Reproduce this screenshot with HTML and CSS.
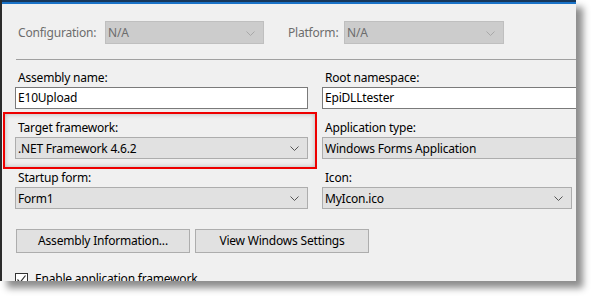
FILE: index.html
```html
<!DOCTYPE html>
<html>
<head>
<meta charset="utf-8">
<link rel="stylesheet" href="styles.css">
</head>
<body>
<div class="page">
<div class="window">
  <div class="topbar"></div>
  <div class="content">
    <div class="config-row">
      <span class="lbl-dis cfg-lbl">Configuration:</span>
      <div class="combo disabled cfg-combo"><span>N/A</span><svg class="chev" width="9" height="5" viewBox="0 0 9 5"><path d="M0.5 0.5 L4.5 4.5 L8.5 0.5" fill="none" stroke="currentColor"/></svg></div>
      <span class="lbl-dis plat-lbl">Platform:</span>
      <div class="combo disabled plat-combo"><span>N/A</span><svg class="chev" width="9" height="5" viewBox="0 0 9 5"><path d="M0.5 0.5 L4.5 4.5 L8.5 0.5" fill="none" stroke="currentColor"/></svg></div>
    </div>
    <div class="sep"></div>
    <div class="grid">
      <div class="cell">
        <div class="lbl">Assembly name:</div>
        <div class="textbox">E10Upload</div>
      </div>
      <div class="cell">
        <div class="lbl">Root namespace:</div>
        <div class="textbox">EpiDLLtester</div>
      </div>
      <div class="cell">
        <div class="lbl">Target framework:</div>
        <div class="combo"><span>.NET Framework 4.6.2</span><svg class="chev" width="9" height="5" viewBox="0 0 9 5"><path d="M0.5 0.5 L4.5 4.5 L8.5 0.5" fill="none" stroke="currentColor"/></svg></div>
      </div>
      <div class="cell">
        <div class="lbl">Application type:</div>
        <div class="combo"><span>Windows Forms Application</span></div>
      </div>
      <div class="cell">
        <div class="lbl">Startup form:</div>
        <div class="combo"><span>Form1</span><svg class="chev" width="9" height="5" viewBox="0 0 9 5"><path d="M0.5 0.5 L4.5 4.5 L8.5 0.5" fill="none" stroke="currentColor"/></svg></div>
      </div>
      <div class="cell">
        <div class="lbl">Icon:</div>
        <div class="combo icon-combo"><span>MyIcon.ico</span><svg class="chev" width="9" height="5" viewBox="0 0 9 5"><path d="M0.5 0.5 L4.5 4.5 L8.5 0.5" fill="none" stroke="currentColor"/></svg></div>
      </div>
    </div>
    <div class="buttons">
      <div class="btn">Assembly Information...</div>
      <div class="btn">View Windows Settings</div>
    </div>
    <div class="check-row">
      <span class="checkbox"><svg width="11" height="11" viewBox="0 0 11 11"><path d="M1.5 5.5 L4 8.5 L9.5 1.5" fill="none" stroke="#333" stroke-width="1.2"/></svg></span>
      <span>Enable application framework</span>
    </div>
  </div>
  <div class="highlight"></div>
</div>
</div>
</body>
</html>
```

FILE: styles.css
```css
* { box-sizing: border-box; }
html, body { margin: 0; padding: 0; background: #ffffff; }
body {
  font-family: "Noto Sans", "Open Sans", sans-serif;
  font-size: 12px;
  letter-spacing: -0.2px;
  color: #000;
}
.page {
  height: 297px;
}
.window {
  position: relative;
  width: 576px;
  height: 281px;
  background: #f0f0f0;
  border-left: 2px solid #2b2b2b;
  overflow: hidden;
  box-shadow: 7px 7px 7px rgba(0, 0, 0, 0.45);
}
.topbar {
  height: 4px;
  border-top: 2px solid #17375a;
  background: #1a73c8;
}
.content {
  padding-left: 13px;
}
.config-row {
  display: flex;
  align-items: center;
  height: 23px;
  margin-top: 17px;
}
.lbl-dis { color: #6d6d6d; line-height: 16px; }
.cfg-lbl { width: 90px; padding-left: 3px; }
.plat-lbl { width: 56px; margin-left: 24px; }
.combo {
  position: relative;
  display: flex;
  align-items: center;
  height: 22px;
  background: #e1e1e1;
  border: 1px solid #adadad;
  padding-left: 2px;
  white-space: nowrap;
}
.combo.disabled {
  height: 23px;
  background: #cccccc;
  border-color: #bfbfbf;
  color: #6d6d6d;
}
.cfg-combo { width: 159px; }
.plat-combo { width: 160px; }
.chev {
  position: absolute;
  right: 8px;
  top: 8px;
  color: #555;
}
.disabled .chev { color: #a8a8a8; top: 9px; }
.sep {
  height: 1px;
  background: #a0a0a0;
  margin-top: 15px;
  margin-left: 1px;
}
.grid {
  display: grid;
  grid-template-columns: 293px 300px;
  column-gap: 14px;
  row-gap: 11px;
  margin-top: 10px;
}
.lbl {
  line-height: 16px;
  padding-left: 3px;
  margin-bottom: 1px;
  white-space: nowrap;
}
.textbox {
  height: 22px;
  background: #fff;
  border: 1px solid #7a7a7a;
  padding-left: 2px;
  line-height: 20px;
  white-space: nowrap;
}
.icon-combo { width: 250px; }
.buttons {
  display: flex;
  gap: 5px;
  margin-top: 20px;
  padding-left: 1px;
}
.btn {
  width: 174px;
  height: 24px;
  background: #e1e1e1;
  border: 1px solid #adadad;
  text-align: center;
  line-height: 22px;
}
.check-row {
  display: flex;
  align-items: center;
  gap: 7px;
  margin-top: 18px;
  line-height: 16px;
}
.checkbox {
  width: 13px;
  height: 13px;
  border: 1px solid #333;
  background: #fff;
  display: flex;
  align-items: center;
  justify-content: center;
}
.highlight {
  position: absolute;
  left: 1px;
  top: 112px;
  width: 314px;
  height: 57px;
  border: 2px solid #ee0000;
  box-shadow: inset 0 0 5px rgba(0, 0, 0, 0.25);
}
```
